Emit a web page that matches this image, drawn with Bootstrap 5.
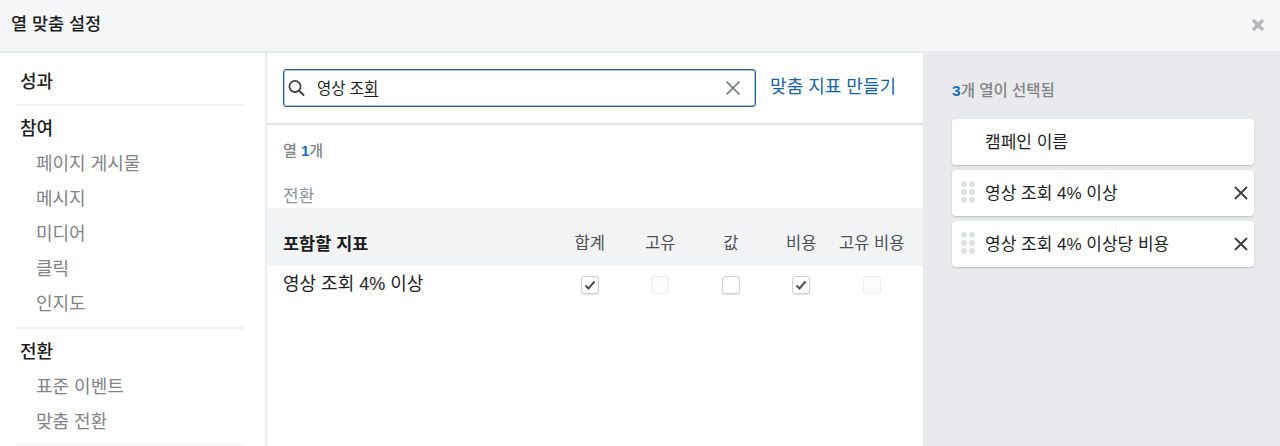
<!doctype html>
<html lang="ko"><head><meta charset="utf-8"><title>열 맞춤 설정</title>
<link rel="stylesheet" href="https://cdn.jsdelivr.net/npm/bootstrap@5.3.0/dist/css/bootstrap.min.css">
<style>
html,body{height:446px;overflow:hidden;background:#fff}
body{font-family:"Liberation Sans","Noto Sans CJK KR",sans-serif;color:#1c1e21;font-size:16px;line-height:1.2}
.dlg-head{height:53px;background:#f5f6f7;border-bottom:2px solid #e9eaed;padding:0 11px}
.dlg-title{font-size:17.5px;font-weight:500;color:#1c1e21;padding-bottom:2px}
.dlg-close{width:16px;height:16px;margin-right:3px;margin-top:-1px}
.dlg-body{height:393px}
.side{width:267px;border-right:2px solid #e9eaed;padding:0 22px 0 20px;flex:none;overflow:hidden}
.side-group{border-bottom:2px solid #f0f1f2;margin-left:-3px;padding-left:3px;padding-bottom:4px}
.side-first{padding-top:19px;padding-bottom:3px}
.side-head{font-size:18px;font-weight:500;height:29px;color:#1c1e21}
.side-next{padding-top:13px}
.side-item{font-size:18px;color:#7f8389;height:35px;padding-left:16px;padding-top:6px}
.mid{width:656px;flex:none}
.search-row{height:72px;border-bottom:2px solid #e0e2e5;padding:16px 27px 0 16px}
.search-box{width:473px;height:38px;border:1px solid #1a5f9e;box-shadow:inset 0 0 0 1px rgba(26,95,158,.35);border-radius:3px;padding:0 6px 0 4px}
.search-text{font-size:15.5px;margin-left:11px;color:#1c1e21;padding-top:2px}
.search-text u{text-underline-offset:2px}
.make-link{font-size:18px;color:#1464a5;text-decoration:none;white-space:nowrap}
.count-line{font-size:15px;font-weight:500;color:#7f8389;padding:17px 0 0 16px;height:42px}
.num{color:#1a6fbc;font-weight:700}
.conv-label{font-size:17px;color:#8d949e;padding:20px 0 0 16px;height:41px}
.metric-head{height:58px;background:#f2f3f5;padding:14px 0 0 16px}
.metric-title{font-size:17.5px;font-weight:700;width:271.5px}
.cell{width:70.5px;text-align:center;flex:none;white-space:nowrap}
.head-cell{font-size:16.5px;color:#4b4f56}
.metric-row{padding:6px 0 0 16px}
.metric-name{font-size:18px;width:271.5px;padding-top:2px}
.tick{width:18px;height:18px;display:inline-block;border-radius:3px;margin-top:4px;background:#fff;border:1px solid #ccd0d5;box-shadow:0 1px 1px rgba(0,0,0,.12);vertical-align:top}
.tick-off{border-color:#eceef0;box-shadow:none;background:#fcfcfd}
.tick svg{display:block;width:16px;height:16px}
.right{flex:1;background:#e9eaed;padding:27px 26px 0 29px}
.sel-count{font-size:15.5px;font-weight:500;color:#7f8389;margin-bottom:20px;height:19px;padding-top:2px}
.sel-card{height:46px;background:#fff;border-radius:4px;box-shadow:0 1px 2px rgba(0,0,0,.2);margin-bottom:5px;padding-left:9px;padding-right:5px;font-size:17px}
.sel-card>span:not(.grip):not(.grip-gap){padding-top:3px}
.grip{width:14px;margin-right:10px;align-self:flex-start;margin-top:11px;display:grid;grid-template-columns:6px 6px;gap:2px;flex:none}
.grip i{width:6px;height:6px;border-radius:50%;background:#dddfe2;display:block}
.grip-gap{width:14px;margin-right:10px;flex:none}
.x-ico{width:16px;height:16px}
</style></head>
<body>
<div class="dlg-head d-flex align-items-center justify-content-between">
  <div class="dlg-title">열 맞춤 설정</div>
  <svg class="dlg-close" viewBox="0 0 16 16"><path d="M3 3l10 10M13 3L3 13" stroke="#b4b7bc" stroke-width="3.4" fill="none"/></svg>
</div>
<div class="dlg-body d-flex">
  <div class="side">
    <div class="side-group side-first"><div class="side-head">성과</div></div>
    <div class="side-group side-next"><div class="side-head">참여</div>
      <div class="side-item">페이지 게시물</div><div class="side-item">메시지</div><div class="side-item">미디어</div><div class="side-item">클릭</div><div class="side-item">인지도</div></div>
    <div class="side-group side-next"><div class="side-head">전환</div>
      <div class="side-item">표준 이벤트</div><div class="side-item">맞춤 전환</div></div>
  </div>
  <div class="mid">
    <div class="search-row d-flex align-items-start justify-content-between">
      <div class="search-box d-flex align-items-center">
        <svg width="18" height="18" viewBox="0 0 18 18" fill="none" stroke="#3a3d42" stroke-width="1.7"><circle cx="7" cy="7.5" r="5.6"/><path d="M11.1 11.6l5 5" stroke-width="2"/></svg>
        <span class="search-text">영상 조<u>회</u></span>
        <svg class="ms-auto me-2" width="16" height="16" viewBox="0 0 16 16" fill="none" stroke="#6f7379" stroke-width="1.6"><path d="M1.5 1.5l13 13M14.5 1.5l-13 13"/></svg>
      </div>
      <a class="make-link mt-2" href="#">맞춤 지표 만들기</a>
    </div>
    <div class="count-line">열 <span class="num">1</span>개</div>
    <div class="conv-label">전환</div>
    <div class="metric-head d-flex align-items-center">
      <div class="metric-title">포함할 지표</div>
      <div class="cell head-cell">합계</div><div class="cell head-cell">고유</div><div class="cell head-cell">값</div><div class="cell head-cell">비용</div><div class="cell head-cell">고유 비용</div>
    </div>
    <div class="metric-row d-flex">
      <div class="metric-name">영상 조회 4% 이상</div>
      <div class="cell"><span class="tick"><svg viewBox="0 0 16 16"><path d="M3.5 8.5l3 3 6-7" fill="none" stroke="#4b4f56" stroke-width="2"/></svg></span></div>
      <div class="cell"><span class="tick tick-off"></span></div>
      <div class="cell"><span class="tick"></span></div>
      <div class="cell"><span class="tick"><svg viewBox="0 0 16 16"><path d="M3.5 8.5l3 3 6-7" fill="none" stroke="#4b4f56" stroke-width="2"/></svg></span></div>
      <div class="cell"><span class="tick tick-off"></span></div>
    </div>
  </div>
  <div class="right">
    <div class="sel-count"><span class="num">3</span>개 열이 선택됨</div>
    <div class="sel-card d-flex align-items-center"><span class="grip-gap"></span><span>캠페인 이름</span></div>
    <div class="sel-card d-flex align-items-center"><span class="grip"><i></i><i></i><i></i><i></i><i></i><i></i></span><span>영상 조회 4% 이상</span>
      <svg class="x-ico ms-auto" viewBox="0 0 16 16" fill="none" stroke="#3a3d42" stroke-width="1.8"><path d="M2 2l12 12M14 2L2 14"/></svg></div>
    <div class="sel-card d-flex align-items-center"><span class="grip"><i></i><i></i><i></i><i></i><i></i><i></i></span><span>영상 조회 4% 이상당 비용</span>
      <svg class="x-ico ms-auto" viewBox="0 0 16 16" fill="none" stroke="#3a3d42" stroke-width="1.8"><path d="M2 2l12 12M14 2L2 14"/></svg></div>
  </div>
</div>
<script src="https://cdn.jsdelivr.net/npm/bootstrap@5.3.0/dist/js/bootstrap.bundle.min.js"></script>
</body></html>
